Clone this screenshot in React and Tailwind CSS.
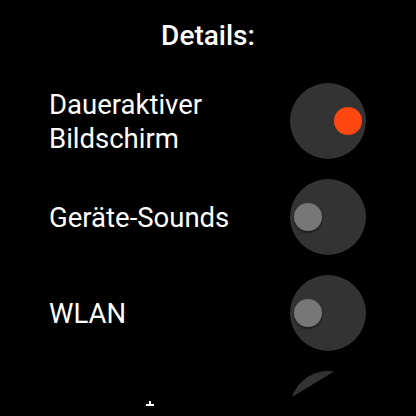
import React from "react";

function Toggle({ on }) {
  return (
    <div className={`w-[76px] h-[76px] rounded-full bg-[#333333] flex items-center p-[4px] ${on ? "justify-end" : "justify-start"}`}>
      <div className={`w-[28px] h-[28px] rounded-full ${on ? "bg-[#ff4711]" : "bg-[#777777] shadow-[0_2px_2px_rgba(0,0,0,0.45)]"}`} />
    </div>
  );
}

function Row({ children, on }) {
  return (
    <div className="h-[96px] flex items-center justify-between pl-[49px] pr-[50px]">
      <div className="text-[27.5px] leading-[34px] text-white pt-[2px]">{children}</div>
      <Toggle on={on} />
    </div>
  );
}

export default function App() {
  return (
    <div className="w-[416px] h-[416px] bg-black overflow-hidden" style={{ fontFamily: "Roboto, 'Noto Sans', sans-serif" }}>
      <div className="pt-[20px] h-[73px] text-center text-white text-[28px] leading-[32px] font-medium">Details:</div>
      <Row on>
        Daueraktiver
        <br />
        Bildschirm
      </Row>
      <Row>Geräte-Sounds</Row>
      <Row>WLAN</Row>
      <div className="h-[96px] flex items-start justify-between pl-[49px] pr-[50px]">
        <svg width="110" height="50" viewBox="0 0 110 50">
          <rect x="100" y="40" width="2" height="5" fill="#ffffff" />
          <rect x="97" y="43" width="8" height="2" fill="#ffffff" />
        </svg>
        <svg width="76" height="76" viewBox="0 0 76 76" className="mt-[10px]">
          <path d="M2 26 A38 38 0 0 1 44 0.5 Z" fill="#333333" />
        </svg>
      </div>
    </div>
  );
}
